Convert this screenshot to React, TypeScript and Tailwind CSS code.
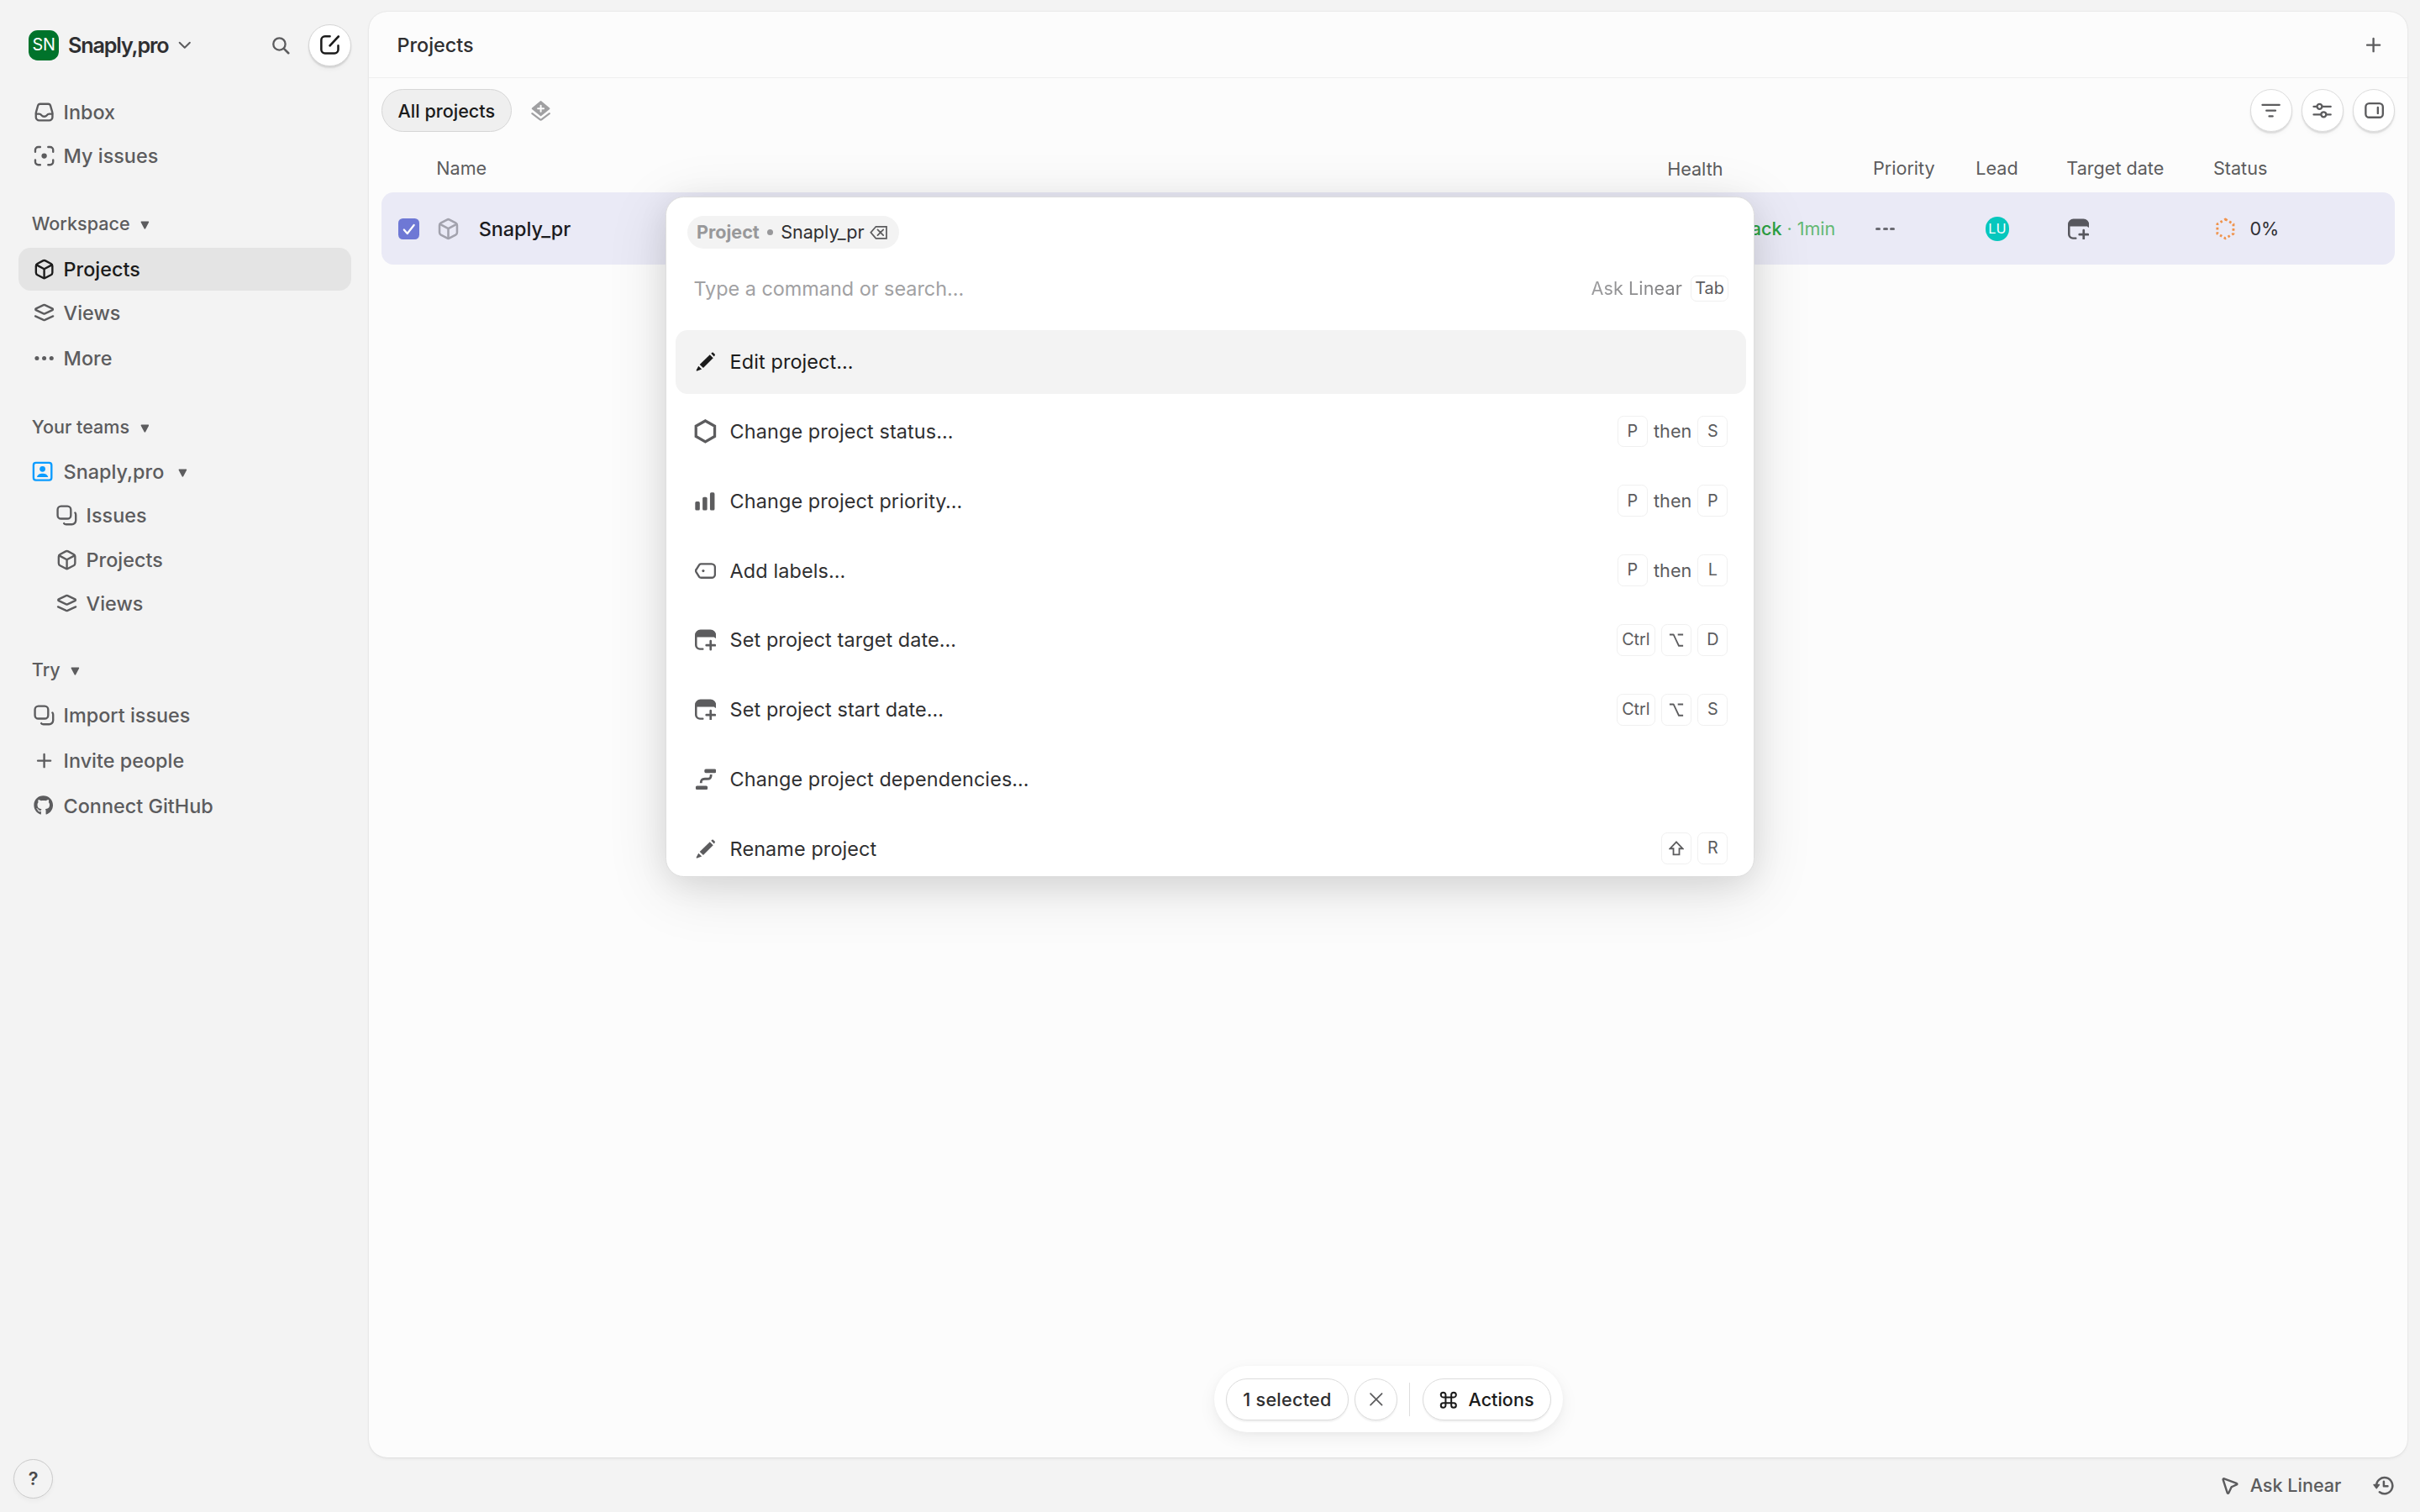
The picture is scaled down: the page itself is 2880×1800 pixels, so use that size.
import type { ReactNode } from 'react';
import { FaGithub } from 'react-icons/fa';
import clsx from 'clsx';

type IconProps = { className?: string; children?: ReactNode };

function Icon({ className = 'size-3.5', children }: IconProps) {
  return (
    <svg
      viewBox="0 0 16 16"
      fill="none"
      stroke="currentColor"
      strokeWidth="1.5"
      strokeLinecap="round"
      strokeLinejoin="round"
      className={clsx('shrink-0', className)}
    >
      {children}
    </svg>
  );
}

const InboxIcon = () => (
  <Icon>
    <path d="M5 1.75h6a1.8 1.8 0 0 1 1.75 1.3l1.4 5c.07.3.1.6.1.9v2.8a2.5 2.5 0 0 1-2.5 2.5h-7.5a2.5 2.5 0 0 1-2.5-2.5v-2.8c0-.3.03-.6.1-.9l1.4-5A1.8 1.8 0 0 1 5 1.75Z" />
    <path d="M1.9 9.25h2.3c.9 0 1.3.4 1.8 1.1.5.6 1 .9 2 .9s1.5-.3 2-.9c.5-.7.9-1.1 1.8-1.1h2.3" />
  </Icon>
);

const FocusIcon = () => (
  <Icon>
    <path d="M1.25 5V3.5A2.25 2.25 0 0 1 3.5 1.25H5M11 1.25h1.5a2.25 2.25 0 0 1 2.25 2.25V5M14.75 11v1.5a2.25 2.25 0 0 1-2.25 2.25H11M5 14.75H3.5a2.25 2.25 0 0 1-2.25-2.25V11" />
    <circle cx="8" cy="8" r="2" fill="currentColor" stroke="none" />
  </Icon>
);

const CubeIcon = ({ className }: { className?: string }) => (
  <Icon className={className}>
    <path d="M7.1 1.5a1.9 1.9 0 0 1 1.8 0l4.3 2.3c.6.35 1 1 1 1.7v5c0 .7-.4 1.35-1 1.7l-4.3 2.3a1.9 1.9 0 0 1-1.8 0l-4.3-2.3c-.6-.35-1-1-1-1.7v-5c0-.7.4-1.35 1-1.7z" />
    <path d="m2.2 4.7 5.8 3.1 5.8-3.1M8 7.8v6.7" />
  </Icon>
);

const LayersIcon = () => (
  <Icon>
    <path d="M7.5 2 1.8 4.7c-.5.25-.5.85 0 1.1L7.5 8.5c.3.13.7.13 1 0l5.7-2.7c.5-.25.5-.85 0-1.1L8.5 2a1.2 1.2 0 0 0-1 0Z" />
    <path d="m1.3 10.4 6.2 2.9c.3.13.7.13 1 0l6.2-2.9" />
  </Icon>
);

const DotsIcon = () => (
  <Icon>
    <g fill="currentColor" stroke="none">
      <circle cx="2.5" cy="8" r="1.6" />
      <circle cx="8" cy="8" r="1.6" />
      <circle cx="13.5" cy="8" r="1.6" />
    </g>
  </Icon>
);

const IssuesIcon = () => (
  <Icon>
    <rect x="1" y="1" width="10" height="9.5" rx="2.6" />
    <path d="M14.2 6c.45.4.55.95.55 1.6v4.15a3 3 0 0 1-3 3H7.5c-.7 0-1.3-.15-1.7-.7" />
  </Icon>
);

const PlusIcon = () => (
  <Icon>
    <path d="M8 3.2v9.6M3.2 8h9.6" />
  </Icon>
);

const TeamIcon = () => (
  <Icon>
    <rect x="1.2" y="1.2" width="13.6" height="13.2" rx="1.8" />
    <g fill="currentColor" stroke="none">
      <circle cx="8" cy="5.9" r="2.15" />
      <path d="M3.8 12.1c.3-1.9 2-2.8 4.2-2.8s3.9.9 4.2 2.8z" />
    </g>
  </Icon>
);

const CalendarIcon = () => (
  <Icon>
    <path
      d="M0 4.5A4.2 4.2 0 0 1 4.2.3h7.6A4.2 4.2 0 0 1 16 4.5v1.9c0 .3-.3.5-.6.4L14.6 6H1.6v6c0 1.3 1 2.3 2.3 2.3h2c.5 0 .8.35.8.75s-.3.75-.8.75H3.8A3.8 3.8 0 0 1 0 12z"
      fill="currentColor"
      stroke="none"
    />
    <path d="M11.9 9v6.4M8.7 12.2h6.5" strokeWidth="1.7" />
  </Icon>
);

const PencilIcon = () => (
  <Icon>
    <g fill="currentColor" stroke="none">
      <path d="m11.3 2.7 2.5 2.6-7.5 7.4-2.7-2.6z" />
      <path d="m12.2 1.8.7-.6c.3-.3.7-.3 1 0l1.1 1.1c.3.3.3.7 0 1l-.5.9z" />
      <path d="M2.7 11.2 5.2 13.7 1.8 15c-.5.2-.9-.2-.7-.7z" />
    </g>
  </Icon>
);

const HexagonIcon = () => (
  <Icon className="size-4">
    <path d="M8 1.1 14.2 4.6v6.8L8 14.9 1.8 11.4V4.6z" strokeWidth="1.8" strokeLinejoin="miter" />
  </Icon>
);

const BarsIcon = () => (
  <Icon>
    <g fill="currentColor" stroke="none">
      <rect x="0.2" y="8.3" width="3.5" height="6.7" rx="1" />
      <rect x="5.8" y="5" width="3.5" height="10" rx="1" />
      <rect x="11.4" y="1.5" width="3.5" height="13.5" rx="1" />
    </g>
  </Icon>
);

const LabelIcon = () => (
  <Icon>
    <path d="M4.7 2.8h7.9a2.6 2.6 0 0 1 2.6 2.6v5.2a2.6 2.6 0 0 1-2.6 2.6H4.7c-.6 0-1.1-.25-1.5-.7L1 9c-.4-.6-.4-1.4 0-2l2.2-3.5c.4-.45.9-.7 1.5-.7Z" />
    <circle cx="6.3" cy="8" r="1" fill="currentColor" stroke="none" />
  </Icon>
);

const DependencyIcon = () => (
  <Icon>
    <rect x="7.2" y="0.3" width="8.8" height="3" rx="1" fill="currentColor" stroke="none" />
    <rect x="0.6" y="13" width="9" height="3" rx="1" fill="currentColor" stroke="none" />
    <path d="M12.2 4.5c0 2.6-.6 3.3-3.2 3.3H7.5c-2.2 0-2.9.8-2.9 3.2" strokeWidth="1.8" strokeLinecap="butt" />
  </Icon>
);

const OptionKey = () => (
  <Icon className="size-2.5">
    <path d="M.8 2.2H5l5.600 11.800h4.600M9.500 2.200h5.700" strokeWidth="1.6" strokeLinecap="butt" />
  </Icon>
);

const ShiftKey = () => (
  <Icon className="size-2.5">
    <path d="m8 1.2 6.6 7h-3.500v6.400H4.900V8.200H1.400z" strokeWidth="1.6" strokeLinejoin="miter" />
  </Icon>
);

const Caret = () => (
  <svg viewBox="0 0 6 6" className="mt-0.5 size-1.5 shrink-0" fill="currentColor">
    <path d="M.8.3h4.4c.4 0 .6.4.4.7L3.4 5.2c-.2.35-.6.35-.8 0L.4 1C.2.7.4.3.8.3Z" />
  </svg>
);

function NavItem({ icon, label, active, nested }: { icon: ReactNode; label: string; active?: boolean; nested?: boolean }) {
  return (
    <a
      className={clsx(
        'flex h-7 items-center gap-1.5 rounded-lg text-[13px] font-medium',
        nested ? 'pl-[25px]' : 'pl-2.5',
        active ? 'bg-[#e4e4e4] text-[#1b1b1b]' : 'text-[#5c5c5e]'
      )}
    >
      {icon}
      {label}
    </a>
  );
}

function SectionLabel({ children }: { children: ReactNode }) {
  return (
    <div className="flex h-7 items-center gap-[7px] pl-[9px] text-xs font-medium text-[#5c5c5e]">
      {children}
      <Caret />
    </div>
  );
}

function Sidebar() {
  return (
    <aside className="flex w-[244px] shrink-0 flex-col px-3 pt-4">
      <div className="flex h-7 items-center pl-[7px]">
        <span className="flex size-5 items-center justify-center rounded-md bg-[#00732b] text-[11px] text-white">SN</span>
        <span className="ml-1.5 text-sm font-[580] tracking-[-0.046em] text-[#2f2f31]">Snaply,pro</span>
        <Icon className="ml-[4.5px] size-3 text-[#5c5c5e]">
          <path d="m3.5 5.8 4.5 4.4 4.5-4.4" />
        </Icon>
        <Icon className="mr-px ml-auto size-3 text-[#5c5c5e]">
          <circle cx="7" cy="7" r="5.3" strokeWidth="1.7" />
          <path d="m11 11 4 4" strokeWidth="1.9" />
        </Icon>
        <button className="ml-[11.5px] flex size-7 items-center justify-center rounded-full border-[0.5px] border-[#d5d5d5] bg-white text-[#1b1b1b] shadow-[0_1px_1px_rgba(0,0,0,0.12),0_3px_3px_rgba(0,0,0,0.02)]">
          <Icon>
            <path d="M8 1.5H4.3a2.8 2.8 0 0 0-2.8 2.8v7.2a2.8 2.8 0 0 0 2.8 2.8h7.2a2.8 2.8 0 0 0 2.8-2.8V8.5" strokeWidth="1.6" />
            <path d="m8 8.5 6.5-7" strokeWidth="1.7" />
          </Icon>
        </button>
      </div>

      <nav className="mt-4 flex flex-col gap-px">
        <NavItem icon={<InboxIcon />} label="Inbox" />
        <NavItem icon={<FocusIcon />} label="My issues" />
      </nav>

      <nav className="mt-[17px] flex flex-col">
        <SectionLabel>Workspace</SectionLabel>
        <div className="mt-0.5">
          <NavItem icon={<CubeIcon />} label="Projects" active />
        </div>
        <div className="mt-px">
          <NavItem icon={<LayersIcon />} label="Views" />
        </div>
        <div className="mt-0.5">
          <NavItem icon={<DotsIcon />} label="More" />
        </div>
      </nav>

      <nav className="mt-[17.5px] flex flex-col">
        <SectionLabel>Your teams</SectionLabel>
        <div className="mt-[1.5px] flex h-7 items-center pl-[9px] text-[13px] font-medium text-[#5c5c5e]">
          <span className="text-[#0b9cff]">
            <TeamIcon />
          </span>
          <span className="mr-[9.5px] ml-[7px]">Snaply,pro</span>
          <Caret />
        </div>
        <div className="mt-px flex flex-col gap-[1.2px]">
          <NavItem nested icon={<IssuesIcon />} label="Issues" />
          <NavItem nested icon={<CubeIcon />} label="Projects" />
          <NavItem nested icon={<LayersIcon />} label="Views" />
        </div>
      </nav>

      <nav className="mt-[15.6px] flex flex-col gap-0.5">
        <SectionLabel>Try</SectionLabel>
        <NavItem icon={<IssuesIcon />} label="Import issues" />
        <NavItem icon={<PlusIcon />} label="Invite people" />
        <NavItem icon={<FaGithub className="mx-[0.5px] size-[13px]" />} label="Connect GitHub" />
      </nav>

      <button className="mt-auto mb-[9px] -ml-[3px] flex size-[26px] items-center justify-center rounded-full border border-[#c9c9c9] text-xs font-semibold text-[#4a4a4c] shadow-[0_2px_3px_rgba(0,0,0,0.03)]">
        ?
      </button>
    </aside>
  );
}

function RoundButton({ children }: { children: ReactNode }) {
  return (
    <button className="flex size-7 items-center justify-center rounded-full border-[0.5px] border-[#dcdcdc] bg-white text-[#5c5c5e] shadow-[0_1px_1px_rgba(0,0,0,0.12),0_3px_3px_rgba(0,0,0,0.02)]">
      {children}
    </button>
  );
}

function Toolbar() {
  return (
    <div className="flex items-center px-2 pt-[7.5px]">
      <button className="h-7 rounded-full border border-[#d6d6d6] bg-[#efefef] px-[10.5px] pt-px text-xs font-medium text-[#1b1b1b]">
        All projects
      </button>
      <Icon className="ml-3 size-3.5 text-[#a0a0a2]">
        <path d="M8 1.3 14.3 6.5 8 11.6 1.7 6.5z" fill="currentColor" strokeWidth="1.2" />
        <path d="M8 4.3v4.4M5.8 6.5h4.4" stroke="#fcfcfc" strokeWidth="1.3" />
        <path d="m1.5 10.3 5.8 4.4c.4.3 1 .3 1.4 0l5.8-4.4" strokeWidth="1.4" />
      </Icon>
      <div className="ml-auto flex gap-1.5">
        <RoundButton>
          <Icon>
            <path d="M1.6 3.7h12.8M4.6 8h6.8M6.7 12.3h2.6" />
          </Icon>
        </RoundButton>
        <RoundButton>
          <Icon>
            <path d="M1.6 5h2.2M8.2 5h6.2M1.6 11h5.3M11.3 11h3.1" />
            <circle cx="6" cy="5" r="1.9" />
            <circle cx="9.1" cy="11" r="1.9" />
          </Icon>
        </RoundButton>
        <RoundButton>
          <Icon>
            <rect x="1.5" y="2.6" width="13" height="10.6" rx="2.6" />
            <path d="M10.7 5.7v4.4" />
          </Icon>
        </RoundButton>
      </div>
    </div>
  );
}

function ProjectTable() {
  return (
    <div className="px-2 text-xs">
      <div className="flex h-10 items-center pt-[9px] pl-[36.5px] font-[430] text-[#5c5c5e]">
        <span className="flex-1">Name</span>
        <span className="w-[136px] pt-px">Health</span>
        <span className="w-[68px]">Priority</span>
        <span className="w-[60px]">Lead</span>
        <span className="w-[97px]">Target date</span>
        <span className="w-[120.2px]">Status</span>
      </div>
      <div className="flex h-12 items-center rounded-lg bg-[#eaeaf6] pt-px pl-[11.5px]">
        <span className="flex size-3.5 items-center justify-center rounded-[3px] bg-[#6e78d5] text-white">
          <Icon className="size-2.5">
            <path d="m2.5 8.5 3.5 4L13 3.5" strokeWidth="2" />
          </Icon>
        </span>
        <span className="ml-[11.5px] text-[#a2a2ad]">
          <CubeIcon className="size-[15px]" />
        </span>
        <span className="ml-[12.5px] flex-1 text-[13px] font-medium text-[#1b1b1f]">Snaply_pr</span>
        <span className="w-[138px] font-medium text-[#2ca243]">
          <span className="flex w-[111.5px] items-center justify-end whitespace-pre">
            On track <span className="font-normal text-[#64b974]">· 1min</span>
          </span>
        </span>
        <span className="flex w-[68.5px] gap-[1.5px]">
          <i className="h-[1.5px] w-[3.3px] rounded-[1px] bg-[#6a6a72]" />
          <i className="h-[1.5px] w-[3.3px] rounded-[1px] bg-[#6a6a72]" />
          <i className="h-[1.5px] w-[3.3px] rounded-[1px] bg-[#6a6a72]" />
        </span>
        <span className="w-[58.5px] pl-1">
          <span className="flex size-4 items-center justify-center rounded-full bg-[#06c7bd] text-[9px] text-white">LU</span>
        </span>
        <span className="w-[96.5px] text-[#57575e]">
          <CalendarIcon />
        </span>
        <span className="flex w-[120px] items-center gap-2 text-[#2f2f33]">
          <Icon className="size-4 text-[#f0924a]">
            <path d="M8 1.7 13.3 4.8v6.4L8 14.3 2.7 11.2V4.8z" strokeWidth="1.6" strokeLinecap="butt" strokeDasharray="1.45 1.6" />
          </Icon>
          0%
        </span>
      </div>
    </div>
  );
}

function Kbd({ children }: { children: ReactNode }) {
  return (
    <kbd className="flex h-[21px] min-w-5 items-center justify-center rounded border-[0.5px] border-[#f0f0f0] px-[3px] font-['Inter',sans-serif] text-[11px] text-[#5c5c5e]">
      {children}
    </kbd>
  );
}

const commands: { icon: ReactNode; label: string; keys?: ReactNode[]; chord?: boolean }[] = [
  { icon: <PencilIcon />, label: 'Edit project…' },
  { icon: <HexagonIcon />, label: 'Change project status…', keys: ['P', 'S'], chord: true },
  { icon: <BarsIcon />, label: 'Change project priority…', keys: ['P', 'P'], chord: true },
  { icon: <LabelIcon />, label: 'Add labels…', keys: ['P', 'L'], chord: true },
  { icon: <CalendarIcon />, label: 'Set project target date…', keys: ['Ctrl', <OptionKey />, 'D'] },
  { icon: <CalendarIcon />, label: 'Set project start date…', keys: ['Ctrl', <OptionKey />, 'S'] },
  { icon: <DependencyIcon />, label: 'Change project dependencies…' },
  { icon: <PencilIcon />, label: 'Rename project', keys: [<ShiftKey />, 'R'] },
];

function CommandMenu() {
  return (
    <div className="absolute top-[130px] left-[440px] flex h-[450px] w-[720px] flex-col overflow-hidden rounded-xl border-[0.5px] border-[#dedede] bg-white pt-3 pr-[5px] pl-1.5 shadow-[0_8px_40px_rgba(0,0,0,0.12),0_4px_20px_rgba(0,0,0,0.08)]">
      <div className="ml-2 flex h-[22px] shrink-0 items-center self-start rounded-full bg-[#f3f3f3] px-1.5 text-xs">
        <span className="font-bold text-[#98989a]">Project</span>
        <span className="mx-[5.3px] size-[3.5px] rounded-full bg-[#98989a]" />
        <span className="text-[#2f2f31]">Snaply_pr</span>
        <Icon className="mr-[1.5px] ml-[3.5px] size-3 text-[#5c5c5e]">
          <path d="M5.5 2.8h9.3v10.4H5.5L1 8z" strokeWidth="1.3" strokeLinejoin="miter" />
          <path d="m7 5.5 5 5M12 5.5l-5 5" strokeWidth="1.3" />
        </Icon>
      </div>
      <div className="mt-3.5 flex h-6 shrink-0 items-center pt-[0.5px] pr-[11.5px] pl-3">
        <span className="text-[13px] text-[#a1a1a3]">Type a command or search…</span>
        <span className="ml-auto bg-gradient-to-r from-[#9c9c9e] to-[#7a7a7c] bg-clip-text text-xs tracking-[0.005em] text-transparent">
          Ask Linear
        </span>
        <kbd className="ml-[5.5px] flex h-[17px] items-center rounded border-[0.5px] border-[#f0f0f0] px-[2.5px] font-['Inter',sans-serif] text-[11px] text-[#5c5c5e]">
          Tab
        </kbd>
      </div>
      <ul className="mt-[15.8px] flex flex-col gap-1">
        {commands.map((cmd, i) => (
          <li
            key={cmd.label}
            className={clsx(
              'flex h-[42px] shrink-0 items-center rounded-lg px-3 text-[13px]',
              i === 0 ? 'bg-[#f3f3f3] text-[#1b1b1b]' : 'text-[#2f2f31]'
            )}
          >
            <span className={clsx('flex w-4 justify-center', i === 0 ? 'text-[#1b1b1b]' : 'text-[#5c5c5e]')}>{cmd.icon}</span>
            <span className="ml-2 tracking-[0.005em]">{cmd.label}</span>
            {cmd.keys && (
              <span className="ml-auto flex items-center gap-1">
                {cmd.keys.map((key, k) => (
                  <span key={k} className="flex items-center gap-1">
                    {cmd.chord && k > 0 && <span className="text-xs text-[#5c5c5e]">then</span>}
                    <Kbd>{key}</Kbd>
                  </span>
                ))}
              </span>
            )}
          </li>
        ))}
      </ul>
    </div>
  );
}

function SelectionBar() {
  const pill =
    'flex h-7 items-center rounded-full border-[0.5px] border-[#dcdcdc] bg-white text-xs font-medium shadow-[0_1px_1px_rgba(0,0,0,0.06)]';
  return (
    <div className="absolute top-[903.5px] left-[803px] flex h-11 items-center rounded-full bg-white px-[7.5px] shadow-[0_4px_12px_rgba(0,0,0,0.06),0_1px_4px_rgba(0,0,0,0.03)]">
      <span className={clsx(pill, 'px-[10.8px] pt-[0.5px] tracking-[0.012em] text-[#2f2f31]')}>1 selected</span>
      <button className={clsx(pill, 'ml-1 w-7 justify-center text-[#5c5c5e]')}>
        <Icon className="size-3">
          <path d="m3 3 10 10M13 3 3 13" strokeWidth="1.3" />
        </Icon>
      </button>
      <span className="mx-[7.8px] h-[22px] w-px bg-[#dedede]" />
      <button className={clsx(pill, 'gap-[7px] px-[11px] pt-[0.5px] text-[#1b1b1b]')}>
        <Icon className="size-3">
          <path d="M5.5 5.5V3.4a2.1 2.1 0 1 0-2.1 2.1h9.2a2.1 2.1 0 1 0-2.1-2.1v9.2a2.1 2.1 0 1 0 2.1-2.1H3.4a2.1 2.1 0 1 0 2.1 2.1z" />
        </Icon>
        Actions
      </button>
    </div>
  );
}

export default function App() {
  return (
    <div className="relative flex h-[1000px] w-[1600px] overflow-hidden bg-[#f3f3f3] font-['Inter',sans-serif] antialiased [zoom:1.8]">
      <Sidebar />

      <div className="flex flex-1 flex-col pt-2 pr-[8.5px]">
        <main className="flex-1 rounded-xl bg-[#fcfcfc] shadow-[0_0_1px_rgba(0,0,0,0.1),0_1px_2px_rgba(0,0,0,0.05)]">
          <header className="flex h-[43.5px] items-center justify-between border-b-[0.5px] border-[#efefef] pt-px pr-[15.5px] pl-[18.5px]">
            <h1 className="text-[13px] font-medium text-[#2f2f31]">Projects</h1>
            <span className="text-[#5c5c5e]">
              <PlusIcon />
            </span>
          </header>
          <Toolbar />
          <ProjectTable />
        </main>

        <footer className="flex h-9 items-center justify-end pt-px pr-[8.5px] text-xs font-[450] text-[#5c5c5e]">
          <Icon className="size-3">
            <path d="M2 2.6c-.2-.6.3-1.1.9-.9l11 4.1c.6.2.6 1 0 1.2L9.8 8.9c-.3.1-.5.3-.6.6l-2.3 4.7c-.3.6-1.1.5-1.2-.1z" strokeWidth="1.8" />
          </Icon>
          <span className="mr-[21px] ml-[7px]">Ask Linear</span>
          <Icon className="size-3.5">
            <path d="M2.6 8A6.1 6.1 0 1 1 5 12.9" strokeWidth="1.6" />
            <path d="M8.2 5v3.4h2.9" strokeWidth="1.6" />
            <path d="M.6 7.3h4.2L2.7 10z" fill="currentColor" strokeWidth=".8" />
          </Icon>
        </footer>
      </div>

      <CommandMenu />
      <SelectionBar />
    </div>
  );
}
